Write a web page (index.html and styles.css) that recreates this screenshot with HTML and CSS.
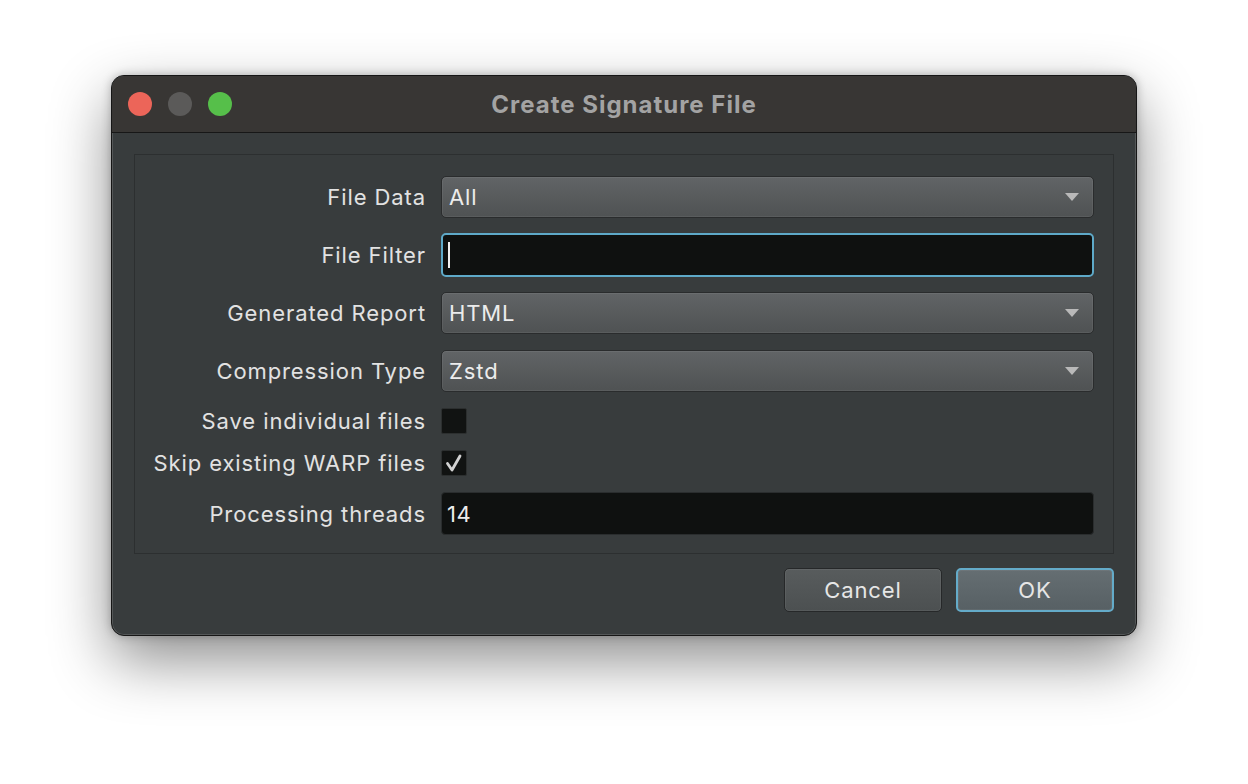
FILE: index.html
```html
<!DOCTYPE html>
<html lang="en">
<head>
    <meta charset="UTF-8">
    <title>Create Signature File</title>
    <link rel="stylesheet" href="styles.css">
</head>
<body>

    <!-- Dialog window -->
    <div class="window">
        <div class="titlebar">
            <div class="lights">
                <span class="light close"></span>
                <span class="light mini"></span>
                <span class="light zoom"></span>
            </div>
            <h1>Create Signature File</h1>
        </div>

        <div class="content">
            <div class="panel">
                <label class="lbl">File Data</label>
                <div class="combo"><span>All</span><i class="arrow"></i></div>

                <label class="lbl">File Filter</label>
                <div class="field focus"><span class="caret"></span></div>

                <label class="lbl">Generated Report</label>
                <div class="combo"><span>HTML</span><i class="arrow"></i></div>

                <label class="lbl">Compression Type</label>
                <div class="combo"><span>Zstd</span><i class="arrow"></i></div>

                <label class="lbl">Save individual files</label>
                <div class="check-row"><span class="check"></span></div>

                <label class="lbl">Skip existing WARP files</label>
                <div class="check-row">
                    <span class="check">
                        <svg width="20" height="20" viewBox="0 0 20 20"><polyline points="3.5,10.5 8,17 16,3" fill="none" stroke="#d2d2d2" stroke-width="2.8" stroke-linecap="round" stroke-linejoin="round"/></svg>
                    </span>
                </div>

                <label class="lbl">Processing threads</label>
                <div class="field"><span>14</span></div>
            </div>

            <div class="buttons">
                <button class="btn">Cancel</button>
                <button class="btn default">OK</button>
            </div>
        </div>
    </div>

</body>
</html>
```

FILE: styles.css
```css
/* Reset */
* {
    margin: 0;
    padding: 0;
    box-sizing: border-box;
}

body {
    font-family: Inter, "Noto Sans", sans-serif;
    background-color: #ffffff;
    width: 1248px;
    height: 784px;
    padding-top: 75px;
    overflow: hidden;
}

/* Window */
.window {
    width: 1026px;
    height: 561px;
    margin-left: 111px;
    border: 1px solid #161616;
    border-radius: 13px;
    background-color: #383c3d;
    box-shadow: inset 0 0 0 1px rgba(255, 255, 255, 0.14),
                0 24px 60px rgba(0, 0, 0, 0.45),
                0 0 10px rgba(0, 0, 0, 0.25);
    overflow: hidden;
    display: flex;
    flex-direction: column;
}

.titlebar {
    height: 57px;
    background-color: #383634;
    border-bottom: 1px solid #171717;
    display: flex;
    align-items: center;
    position: relative;
}

.lights {
    display: flex;
    gap: 16px;
    padding-left: 16px;
}

.light {
    width: 24px;
    height: 24px;
    border-radius: 50%;
    display: block;
}

.light.close { background-color: #ec6559; }
.light.mini  { background-color: #5b5a59; }
.light.zoom  { background-color: #56bf4a; }

.titlebar h1 {
    position: absolute;
    left: 0;
    right: 0;
    text-align: center;
    font-size: 24px;
    font-weight: 700;
    color: #a3a3a3;
    letter-spacing: 1px;
}

/* Content */
.content {
    flex: 1;
    padding: 21px 22px 22px 22px;
    display: flex;
    flex-direction: column;
}

.panel {
    border: 1px solid #2c2f30;
    padding: 21px 19px 18px 0;
    display: grid;
    grid-template-columns: 291px 1fr;
    column-gap: 15px;
    row-gap: 16px;
    align-items: center;
}

.lbl {
    text-align: right;
    font-size: 22px;
    letter-spacing: 0.9px;
    color: #e2e2e2;
}

/* Combo boxes */
.combo {
    height: 42px;
    border: 1px solid #2a2c2d;
    border-radius: 5px;
    background: linear-gradient(#616466, #4f5253);
    box-shadow: inset 0 0 0 1px rgba(255, 255, 255, 0.06);
    display: flex;
    align-items: center;
    justify-content: space-between;
    padding: 0 14px 0 7px;
    font-size: 22px;
    letter-spacing: 0.9px;
    color: #ececec;
}

.arrow {
    width: 0;
    height: 0;
    border-left: 7px solid transparent;
    border-right: 7px solid transparent;
    border-top: 8px solid #b9b9b9;
}

/* Text fields */
.field {
    height: 43px;
    background-color: #0f1110;
    border: 1px solid #2a2d2e;
    border-radius: 4px;
    display: flex;
    align-items: center;
    padding-left: 5px;
    font-size: 22px;
    letter-spacing: 0.6px;
    color: #ececec;
}

.field.focus {
    height: 44px;
    border: 2px solid #5ea9c8;
    border-radius: 5px;
    margin: -1px 0;
}

.caret {
    width: 2px;
    height: 26px;
    background-color: #f0f0f0;
}

/* Checkboxes */
.check-row {
    height: 26px;
    display: flex;
    align-items: center;
}

.check {
    width: 26px;
    height: 26px;
    background-color: #111312;
    border: 1px solid #2c2f2f;
    border-radius: 2px;
    display: flex;
    align-items: center;
    justify-content: center;
}

/* Buttons */
.buttons {
    margin-top: 14px;
    display: flex;
    justify-content: flex-end;
    gap: 14px;
}

.btn {
    width: 158px;
    height: 44px;
    font-family: Inter, "Noto Sans", sans-serif;
    font-size: 22px;
    letter-spacing: 0.9px;
    color: #e6e6e6;
    background: linear-gradient(#585c5d, #4c5051);
    border: 1px solid #262829;
    border-radius: 5px;
    box-shadow: inset 0 0 0 1px rgba(255, 255, 255, 0.06);
}

.btn.default {
    background: linear-gradient(#656e72, #576064);
    border: 2px solid #64abc9;
}
```
